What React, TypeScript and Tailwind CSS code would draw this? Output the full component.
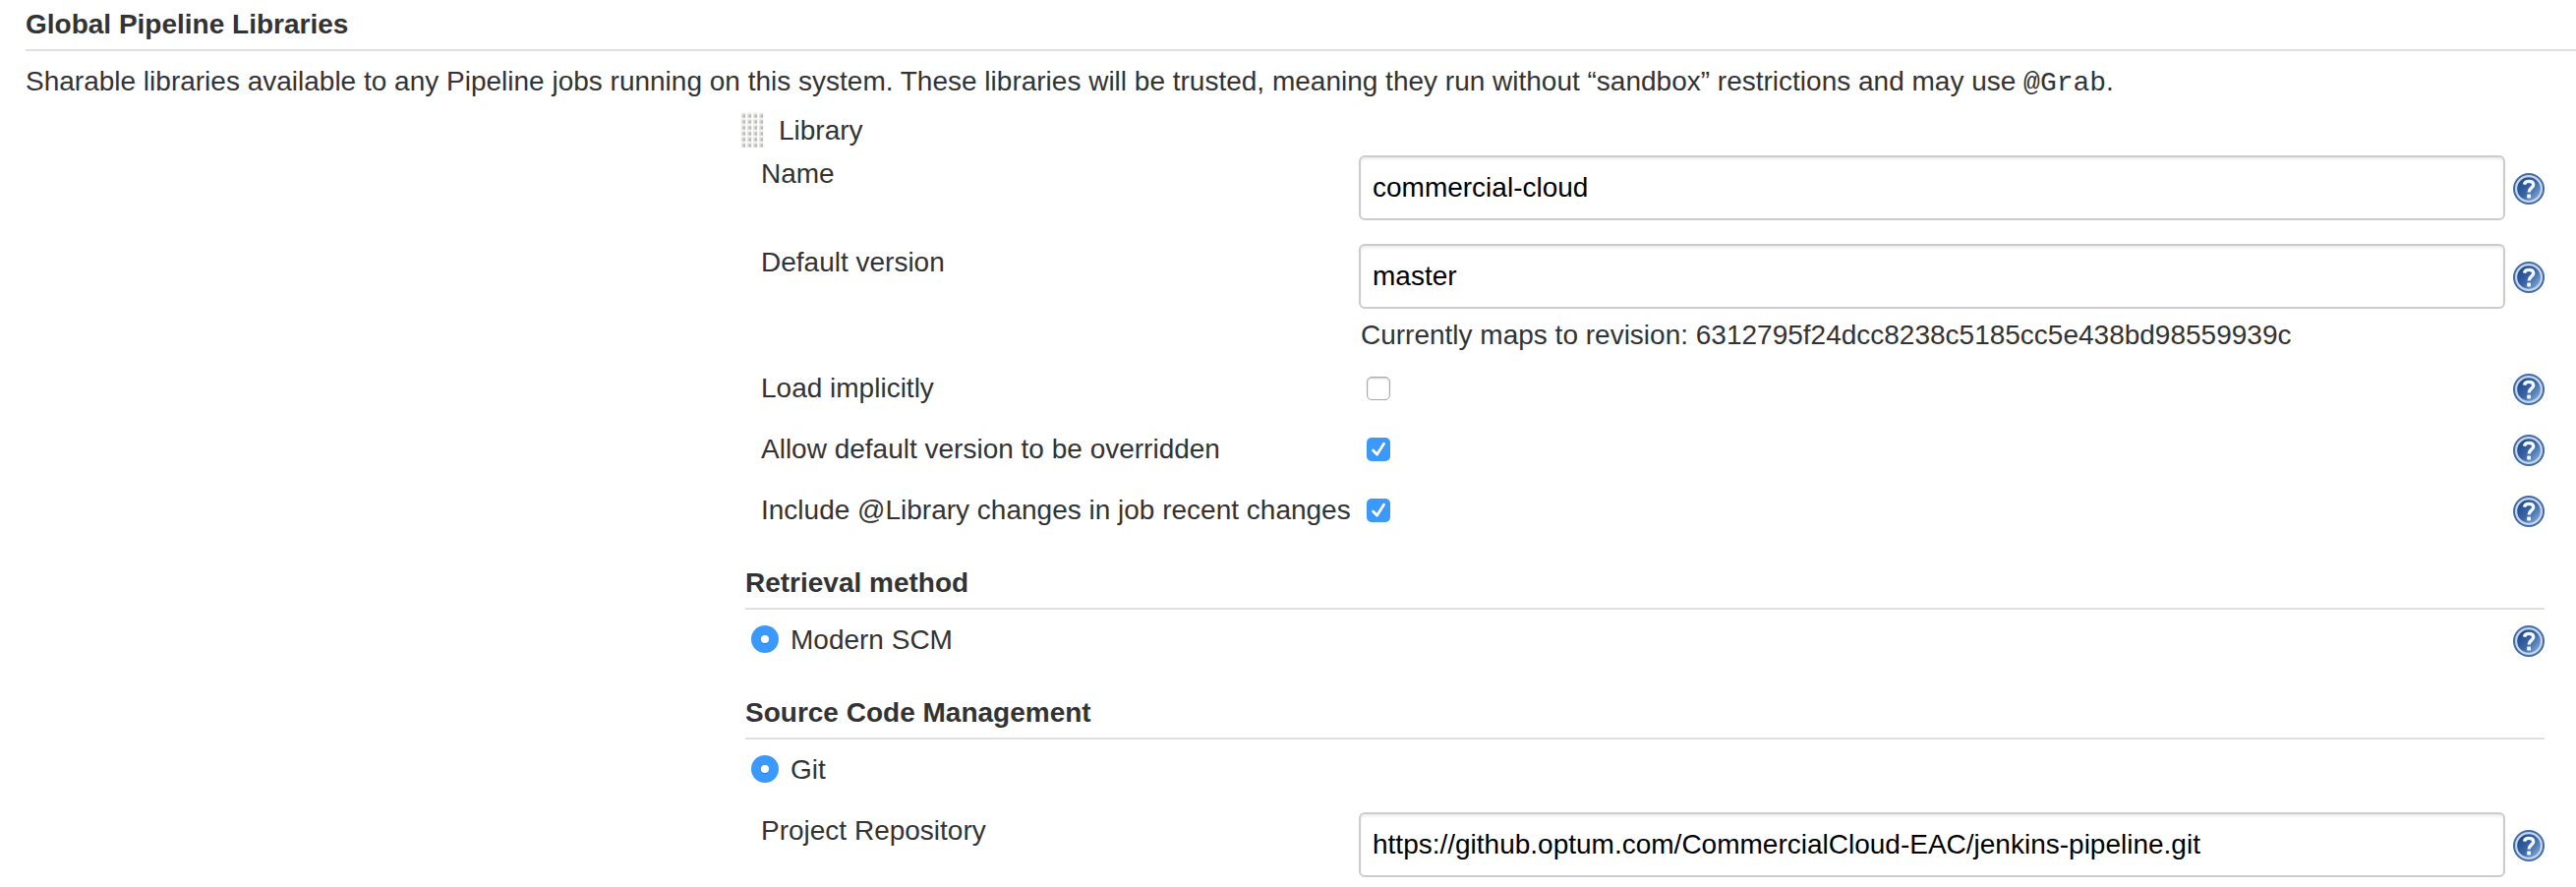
import type { ReactNode } from "react";

function HelpIcon() {
  return (
    <svg viewBox="0 0 32 32" className="block size-8 shrink-0" role="img">
      <defs>
        <linearGradient id="helpFill" x1="0.1" y1="0.2" x2="0.9" y2="0.9">
          <stop offset="0" stopColor="#1f4b90" />
          <stop offset="0.5" stopColor="#3a66a7" />
          <stop offset="1" stopColor="#86abd6" />
        </linearGradient>
      </defs>
      <circle cx="16" cy="16" r="16" fill="#426aa6" />
      <circle cx="16" cy="16" r="12.900" fill="url(#helpFill)" stroke="#c6d5e9" strokeWidth="2.200" />
      <path
        d="M11.4 11.6C12 9.2 13.8 8.4 16 8.4c2.800 0 4.700 1.300 4.700 3.500 0 3.300-4.600 3.300-4.600 7.500"
        fill="none"
        stroke="#f6f9fc"
        strokeWidth="3.400"
      />
      <rect x="14.200" y="21.400" width="3.800" height="4" rx="0.600" fill="#f6f9fc" />
    </svg>
  );
}

function DragHandle() {
  const rows = [0, 1, 2, 3, 4, 5];
  const cols = [0, 1, 2, 3];
  return (
    <svg viewBox="0 0 24 38" className="block h-[38px] w-6 shrink-0">
      {rows.map((r) =>
        cols.map((c) => (
          <g key={`${r}-${c}`}>
            <rect x={c * 6} y={r * 6 + 0.5} width="4.500" height="5.500" fill="#ecece9" />
            <rect x={c * 6 + 0.5} y={r * 6 + 2.5} width="3.500" height="3" fill="#d2d2ce" />
            <rect x={c * 6 + 2} y={r * 6 + 2.5} width="2" height="3" fill="#bcbcb7" />
          </g>
        )),
      )}
    </svg>
  );
}

function Checkbox({ checked }: { checked: boolean }) {
  return checked ? (
    <svg viewBox="0 0 24 24" className="block size-6">
      <rect width="24" height="24" rx="5" fill="#3b99fc" />
      <path d="M6.500 13.800l4 4.200 7-11" fill="none" stroke="#1f78d8" strokeOpacity="0.5" strokeWidth="2.800" strokeLinecap="round" strokeLinejoin="round" />
      <path d="M6.500 13l4 4.300 7-11" fill="none" stroke="#fff" strokeWidth="2.800" strokeLinecap="round" strokeLinejoin="round" />
    </svg>
  ) : (
    <div className="size-6 rounded-[5px] border border-[#a9a9a9] bg-white shadow-[inset_0_1px_2px_rgba(0,0,0,0.22)]" />
  );
}

function Radio({ label }: { label: string }) {
  return (
    <div className="flex h-8">
      <svg viewBox="0 0 28 28" className="mt-0.5 ml-1.5 block size-7">
        <circle cx="14" cy="14" r="14" fill="#3b99fc" />
        <circle cx="14" cy="15" r="4.200" fill="#2a7fdc" />
        <circle cx="14" cy="14" r="4.100" fill="#fff" />
      </svg>
      <span className="mt-px ml-3">{label}</span>
    </div>
  );
}

function TextRow({ label, value, className }: { label: string; value: string; className: string }) {
  return (
    <div className={`flex h-[66px] ${className}`}>
      <div className="mt-[3px] ml-4 w-[608px]">{label}</div>
      <div className="flex h-[66px] w-[1166px] items-center rounded-md border-2 border-[#ccc] bg-white px-3 text-black shadow-[inset_0_2px_3px_rgba(0,0,0,0.08)]">
        {value}
      </div>
      <div className="mt-[18px] ml-2">
        <HelpIcon />
      </div>
    </div>
  );
}

function CheckRow({ label, checked }: { label: string; checked: boolean }) {
  return (
    <div className="flex h-[62px]">
      <div className="mt-px ml-4 w-[616px] whitespace-nowrap">{label}</div>
      <div className="mt-[5px]">
        <Checkbox checked={checked} />
      </div>
      <div className="mt-0.5 ml-auto">
        <HelpIcon />
      </div>
    </div>
  );
}

function SectionTitle({ children, className }: { children: ReactNode; className: string }) {
  return <h2 className={`border-b-2 border-[#e0e0e0] font-bold ${className}`}>{children}</h2>;
}

export default function App() {
  return (
    <main className="h-[902px] w-[2620px] overflow-hidden bg-white font-['Liberation_Sans',Arial,sans-serif] text-[28px] leading-8 text-[#333]">
      <SectionTitle className="ml-[26px] h-[52px] pt-[9px]">Global Pipeline Libraries</SectionTitle>
      <p className="mt-[15px] ml-[26px] h-[31px] whitespace-nowrap">
        Sharable libraries available to any Pipeline jobs running on this system. These libraries will be trusted,
        meaning they run without “sandbox” restrictions and may use{" "}
        <code className="font-['Liberation_Mono',monospace]">@Grab</code>.
      </p>
      <section className="ml-[758px] w-[1830px]">
        <div className="-ml-1 flex h-[60px] pt-4">
          <DragHandle />
          <span className="mt-[3px] ml-3.5">Library</span>
        </div>
        <TextRow label="Name" value="commercial-cloud" className="" />
        <TextRow label="Default version" value="master" className="mt-6" />
        <div className="mt-[11px] ml-[626px] h-8">Currently maps to revision: 6312795f24dcc8238c5185cc5e438bd98559939c</div>
        <div className="mt-[21px]">
          <CheckRow label="Load implicitly" checked={false} />
          <CheckRow label="Allow default version to be overridden" checked />
          <CheckRow label="Include @Library changes in job recent changes" checked />
        </div>
        <SectionTitle className="mt-3 h-11 pt-px">Retrieval method</SectionTitle>
        <div className="mt-3.5 flex h-8 justify-between">
          <Radio label="Modern SCM" />
          <div className="mt-0.5">
            <HelpIcon />
          </div>
        </div>
        <SectionTitle className="mt-[42px] h-11 pt-px">Source Code Management</SectionTitle>
        <div className="mt-3.5">
          <Radio label="Git" />
        </div>
        <TextRow label="Project Repository" value="https://github.optum.com/CommercialCloud-EAC/jenkins-pipeline.git" className="mt-7" />
      </section>
    </main>
  );
}
